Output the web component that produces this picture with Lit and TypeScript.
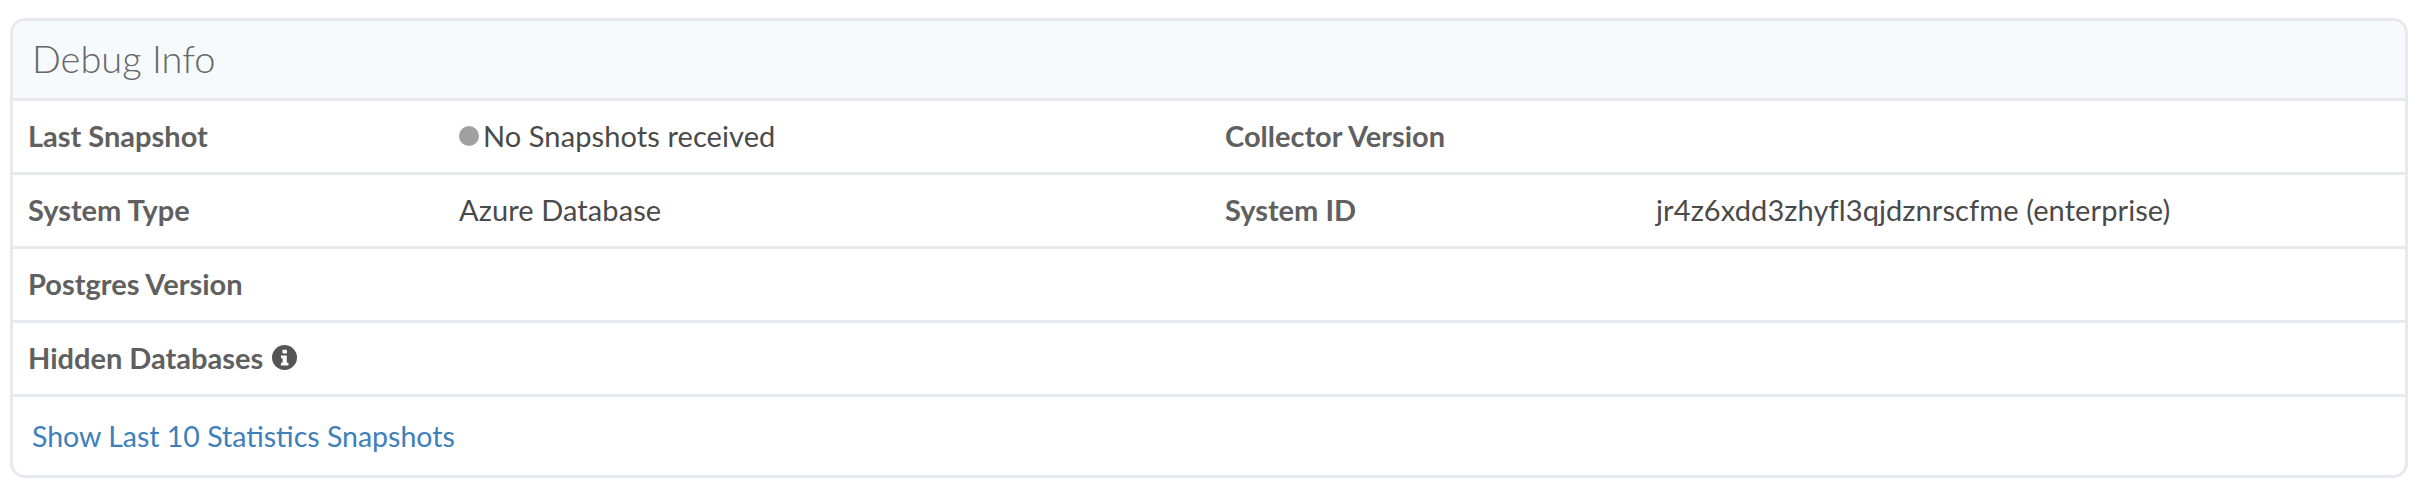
import {LitElement, html, css} from 'lit';
import {customElement} from 'lit/decorators.js';

@customElement('app-root')
export class AppRoot extends LitElement {
  static styles = css`
    :host {
      display: block;
      padding: 18px 14px 0 10px;
      font-family: Lato, "Noto Sans", sans-serif;
      font-size: 29px;
      color: #555;
    }
    .card {
      border: 3px solid #e8e8ef;
      border-radius: 15px;
      overflow: hidden;
      background: #fff;
    }
    .head {
      height: 74px;
      padding: 0 0 3px 19px;
      display: flex;
      align-items: center;
      background: #f6fafd;
      font-size: 38px;
      font-weight: 300;
      color: #666;
      border-bottom: 3px solid #e8e8ef;
    }
    .row {
      height: 68px;
      padding: 0 0 3px 15px;
      display: grid;
      grid-template-columns: 431px 766px 431px 1fr;
      align-items: center;
      border-bottom: 3px solid #e8e8ef;
    }
    .label {
      font-weight: 700;
      color: #606060;
      display: flex;
      align-items: center;
      gap: 8px;
    }
    .value {
      color: #4a4a4a;
      font-weight: 400;
      letter-spacing: 0.1px;
      display: flex;
      align-items: center;
    }
    .dot {
      width: 20px;
      height: 20px;
      border-radius: 50%;
      background: #a0a0a0;
      margin: 2px 4px 0 0;
    }
    .foot {
      height: 78px;
      padding-left: 19px;
      display: flex;
      align-items: center;
      font-size: 28.5px;
    }
    a {
      color: #3d80ba;
      text-decoration: none;
    }
    svg {
      width: 25px;
      height: 25px;
      display: block;
      margin-left: 1px;
    }
  `;

  render() {
    return html`
      <div class="card">
        <div class="head">Debug Info</div>
        <div class="row">
          <div class="label">Last Snapshot</div>
          <div class="value"><span class="dot"></span>No Snapshots received</div>
          <div class="label">Collector Version</div>
          <div class="value"></div>
        </div>
        <div class="row">
          <div class="label">System Type</div>
          <div class="value">Azure Database</div>
          <div class="label">System ID</div>
          <div class="value">jr4z6xdd3zhyfl3qjdznrscfme (enterprise)</div>
        </div>
        <div class="row">
          <div class="label">Postgres Version</div>
        </div>
        <div class="row">
          <div class="label">Hidden Databases
            <svg viewBox="0 0 24 24">
              <circle cx="12" cy="12" r="12" fill="#555"></circle>
              <rect x="10" y="4.5" width="4.4" height="3.6" rx="0.8" fill="#fff"></rect>
              <path d="M8.6 10h5.6v7h1.6v2.6H8.6V17h1.6v-4.4H8.6z" fill="#fff"></path>
            </svg>
          </div>
        </div>
        <div class="foot"><a href="#">Show Last 10 Statistics Snapshots</a></div>
      </div>
    `;
  }
}
